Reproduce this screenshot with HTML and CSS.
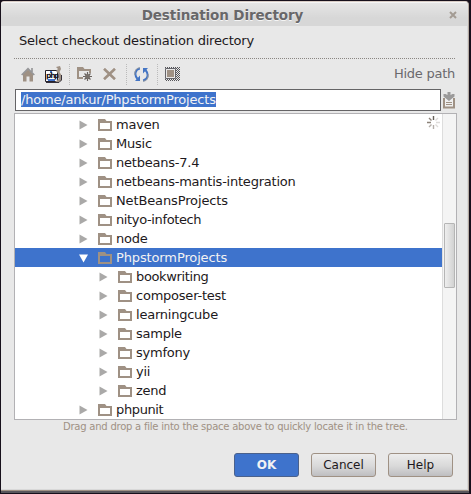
FILE: index.html
```
<!DOCTYPE html>
<html lang="en">
<head>
<meta charset="utf-8">
<title>Destination Directory</title>
<link rel="stylesheet" href="styles.css">
</head>
<body>
<svg class="defs" width="0" height="0">
  <symbol id="folder" viewBox="0 0 14 12"><path fill="#9f9184" fill-rule="evenodd" d="M0 0H7L8.500 2H14V12H0ZM2 4V10H12V4Z"/></symbol>
  <symbol id="closed" viewBox="0 0 9 10"><path fill="#aaa9a8" d="M.5 .5L8.500 5L.5 9.500Z"/></symbol>
  <symbol id="open" viewBox="0 0 9 10"><path fill="#fff" d="M0 1.500H9L4.500 9.500Z"/></symbol>
</svg>
<div class="window">
  <header class="titlebar"><h1>Destination Directory</h1>
    <svg class="close" width="8" height="8" viewBox="0 0 8 8"><path d="M1 1L7 7M7 1L1 7" stroke="#a39b93" stroke-width="2"/></svg>
  </header>
  <p class="prompt"><span>Select checkout destination directory</span></p>
  <div class="toolbar">
    <svg class="home" width="14" height="15" viewBox="0 0 14 15"><path d="M2 7L7 2.500L12 7V14.500H8.500V9.500H5.500V14.500H2Z" fill="#9f9184"/><path d="M.7 8L7 1.700L13.300 8M11 1V5" fill="none" stroke="#969698" stroke-width="1.700"/></svg>
    <svg class="project" width="17" height="17" viewBox="0 0 17 17"><path d="M.5 4.500H12.500V15.500H.5Z" fill="#fff" stroke="#26222b"/><path d="M3 13H10V15H3ZM5 5H7V7H5Z" fill="#4073cc"/><text class="php" x="1" y="12">php</text><path d="M11 1L15 0L16 3L14.500 6L17 10V14L14 16H10L13.500 13V8L11 5L13 3Z" fill="#9f9184"/><path d="M16.500 9V14L14 16.500H1" fill="none" stroke="#34303a"/></svg>
    <i></i>
    <svg class="newfolder" width="16" height="14" viewBox="0 0 16 14"><path d="M0 0H6L7.500 2H14V6H12V4H2V10H6V12H0Z" fill="#9f9184"/><path d="M10.500 5V14M6 9.500H15M7.500 6.500L13.500 12.500M13.500 6.500L7.500 12.500" stroke="#68625e" stroke-width="1.200"/><circle cx="10.500" cy="9.500" r="2.500" fill="#77706a"/></svg>
    <svg class="delete" width="13" height="12" viewBox="0 0 13 12"><path d="M1 .7L12 11.300M12 .7L1 11.300" stroke="#9f9184" stroke-width="2.600"/></svg>
    <i></i>
    <svg class="refresh" width="15" height="15" viewBox="0 0 15 15"><path d="M6 1.500C1 2 0 8 3.500 12M9 13.500C14 13 15 7 11.500 3" fill="none" stroke="#4475c4" stroke-width="2"/><path d="M6 8.500V14H1ZM9 6.500V1H14Z" fill="#4475c4"/><path d="M6 .8C2 1 .5 4 .8 8M9 14.200C13 14 14.500 11 14.200 7" fill="none" stroke="#9b9b9b"/></svg>
    <i></i>
    <svg class="hidden" width="15" height="14" viewBox="0 0 15 14"><defs><pattern id="dots" width="2" height="2" patternUnits="userSpaceOnUse"><path fill="#55555a" d="M0 0H1V1H0ZM1 1H2V2H1Z"/></pattern></defs><path fill="url(#dots)" d="M0 0H15V14H0Z"/><path d="M.5 1.500H10.500V11.500H.5Z" fill="#e8e8e8" stroke="#65656a"/><path d="M2 3H9V10H2Z" fill="#9f9184"/></svg>
    <a>Hide path</a>
  </div>
  <div class="pathrow">
    <div class="field"><span>/home/ankur/PhpstormProjects</span></div>
    <svg width="12" height="17" viewBox="0 0 12 17"><path d="M1 6V15.500H11V6" fill="#efefef" stroke="#9f9184" stroke-width="2"/><path d="M3 10.500H9M3 12.500H9" stroke="#9f9184"/><path d="M4.500 0H7.500V3L9.500 2H11.500V4.500L6 9L.5 4.500V2H2.500L4.500 3Z" fill="#9b9a9a"/></svg>
  </div>
  <div class="tree">
    <ul>
      <li><svg class="arrow"><use href="#closed"/></svg><svg class="folder"><use href="#folder"/></svg><span>maven</span></li>
      <li><svg class="arrow"><use href="#closed"/></svg><svg class="folder"><use href="#folder"/></svg><span>Music</span></li>
      <li><svg class="arrow"><use href="#closed"/></svg><svg class="folder"><use href="#folder"/></svg><span>netbeans-7.4</span></li>
      <li><svg class="arrow"><use href="#closed"/></svg><svg class="folder"><use href="#folder"/></svg><span>netbeans-mantis-integration</span></li>
      <li class="camel"><svg class="arrow"><use href="#closed"/></svg><svg class="folder"><use href="#folder"/></svg><span>NetBeansProjects</span></li>
      <li class="tight"><svg class="arrow"><use href="#closed"/></svg><svg class="folder"><use href="#folder"/></svg><span>nityo-infotech</span></li>
      <li><svg class="arrow"><use href="#closed"/></svg><svg class="folder"><use href="#folder"/></svg><span>node</span></li>
      <li class="selected camel"><svg class="arrow"><use href="#open"/></svg><svg class="folder"><use href="#folder"/></svg><span>PhpstormProjects</span></li>
      <li class="child tight"><svg class="arrow"><use href="#closed"/></svg><svg class="folder"><use href="#folder"/></svg><span>bookwriting</span></li>
      <li class="child"><svg class="arrow"><use href="#closed"/></svg><svg class="folder"><use href="#folder"/></svg><span>composer-test</span></li>
      <li class="child"><svg class="arrow"><use href="#closed"/></svg><svg class="folder"><use href="#folder"/></svg><span>learningcube</span></li>
      <li class="child"><svg class="arrow"><use href="#closed"/></svg><svg class="folder"><use href="#folder"/></svg><span>sample</span></li>
      <li class="child"><svg class="arrow"><use href="#closed"/></svg><svg class="folder"><use href="#folder"/></svg><span>symfony</span></li>
      <li class="child"><svg class="arrow"><use href="#closed"/></svg><svg class="folder"><use href="#folder"/></svg><span>yii</span></li>
      <li class="child"><svg class="arrow"><use href="#closed"/></svg><svg class="folder"><use href="#folder"/></svg><span>zend</span></li>
      <li class="tight"><svg class="arrow"><use href="#closed"/></svg><svg class="folder"><use href="#folder"/></svg><span>phpunit</span></li>
    </ul>
    <div class="scroll"><div class="thumb"></div></div>
    <svg class="spinner" width="13" height="13" viewBox="0 0 13 13" fill="none" stroke-width="1.400"><path d="M6.500 0V4" stroke="#665f58"/><path d="M2 2L4.500 4.500M0 6.500H4" stroke="#8c8279"/><path d="M2 11L4.500 8.500M6.500 9V13" stroke="#b5afaa"/><path d="M8.500 8.500L11 11M9 6.500H13M8.500 4.500L11 2" stroke="#dddbd9"/></svg>
  </div>
  <p class="hint"><span>Drag and drop a file into the space above to quickly locate it in the tree.</span></p>
  <div class="buttons"><button class="ok">OK</button><button>Cancel</button><button>Help</button></div>
</div>
<div class="below"></div>
</body>
</html>
```
FILE: styles.css
```
* { box-sizing: border-box; }
body { margin: 0; width: 471px; height: 494px; overflow: hidden; background: #17101b; padding: 1px 2px 1px 1px; font: 13px/19px "DejaVu Sans", sans-serif; color: #1d1920; }
svg { display: block; flex: none; }
.defs { position: absolute; }
.window { height: 490px; background: #e8e8e8; border: 1px solid #b5aaa1; border-top-color: #d8ccc5; border-left: 0; border-bottom-color: #9f9184; border-radius: 3px 4px 0 0; box-shadow: inset -1px -1px #d8d8d8; overflow: hidden; }
.titlebar { height: 24px; display: flex; align-items: center; justify-content: center; position: relative; border-top: 1px solid #f5f5f5; background: linear-gradient(#e5e5e5, #d7d7d7 65%); }
h1 { margin: 0; font-size: 13.500px; line-height: 20px; letter-spacing: -.1px; color: #686769; text-shadow: 0 1px #f5f5f5; padding-right: 24px; }
.close { position: absolute; right: 11px; top: 8px; }
.prompt { margin: 0 13px; height: 33px; padding: 5px 0 0 5px; border-bottom: 1px dotted #8a8682; letter-spacing: -.2px; }
.toolbar { height: 30px; padding: 0 13px 0 20px; display: flex; align-items: center; }
.toolbar i { width: 1px; height: 21px; border-left: 1px dotted #bbb; }
.project { margin: 0 7px 0 10px; }
.php { font: bold 7.500px "DejaVu Sans", sans-serif; letter-spacing: -1.200px; fill: #17131d; }
.newfolder { margin: 0 10px 0 7px; }
.delete { margin-right: 10px; }
.refresh { margin: 0 8px 0 7px; }
.hidden { margin-left: 7px; }
.toolbar a { margin-left: auto; color: #6a696d; padding-bottom: 1px; letter-spacing: -.25px; }
.pathrow { height: 22px; display: flex; align-items: center; gap: 2px; padding-left: 14px; }
.field { width: 426px; height: 22px; background: #fff; border: 1px solid #656466; padding: 2px 5px; line-height: 15px; }
.field span { display: inline-block; height: 15px; line-height: 16px; letter-spacing: -.19px; color: #f2f2f3; background: #3e73cc; }
.tree { position: relative; display: flex; margin: 2px 0 0 13px; width: 443px; height: 307px; border: 1px solid #b2b1b4; background: #fff; }
ul { list-style: none; margin: 0; padding: 1px 0 0; flex: 1; letter-spacing: -.23px; }
li { display: flex; align-items: center; height: 19px; padding-left: 64px; }
.camel { letter-spacing: -.13px; }
.tight { letter-spacing: -.37px; }
.child { padding-left: 84px; }
.selected { background: #3e73cc; color: #f2f2f3; }
.arrow { width: 9px; height: 10px; }
.folder { width: 14px; height: 12px; margin: 0 4px 0 10px; }
.scroll { width: 14px; border-left: 1px solid #ddd; background: #f4f4f4; padding: 109px 1px 0; }
.thumb { width: 11px; height: 65px; border: 1px solid #b5b5b5; border-radius: 1px; background: linear-gradient(90deg, #eee, #d2d2d2); }
.spinner { position: absolute; left: 412px; top: 2px; }
.hint { margin: 0; height: 33px; padding-left: 62px; font-size: 10px; line-height: 13px; letter-spacing: -.23px; color: #9f9184; }
.buttons { display: flex; gap: 12px; padding-left: 233px; }
button { width: 65px; height: 24px; padding: 0; border: 1px solid #9f9184; border-radius: 3px; background: linear-gradient(#ececec, #d9d9d9 55%, #bebec1); color: #1d1920; font: 12px/20px "DejaVu Sans", sans-serif; }
.ok { background: #3e73cc; border-color: #4a618c; color: #f2f2f3; font-weight: bold; }
.below { height: 2px; background: #59565c; }
```
